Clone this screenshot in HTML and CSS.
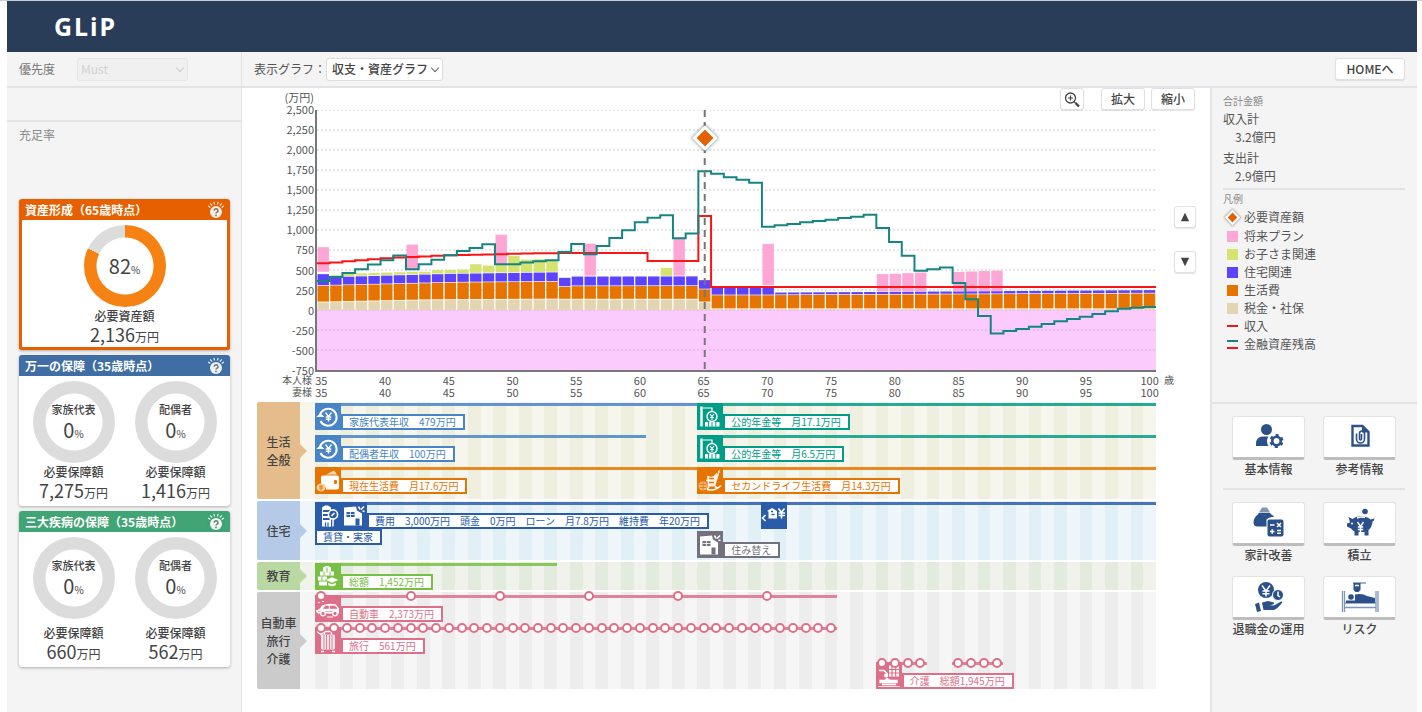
FILE: index.html
```html
<!DOCTYPE html>
<html lang="ja">
<head>
<meta charset="utf-8">
<meta name="viewport" content="width=device-width, initial-scale=1">
<title>GLiP</title>
<link rel="stylesheet" href="styles.css">
</head>
<body>
<svg class="sprite" aria-hidden="true">
  <symbol id="i-help" viewBox="0 0 18 18">
    <g stroke="currentColor" stroke-width="1.2" stroke-linecap="round"><path d="M1.5 5.2 3 6.2M3.6 2.8 4.8 4.2M7 1.4 7.4 3M11 1.4 10.6 3M14.4 2.8 13.2 4.2M16.5 5.2 15 6.2"/></g>
    <circle cx="9" cy="11" r="6" fill="currentColor"/>
    <path d="M7.2 9.8a1.9 1.9 0 1 1 2.6 1.6q-.8.4-.8 1.2" fill="none" class="help-mark" stroke-width="1.5"/>
    <circle cx="9" cy="14.4" r=".9" class="help-dot"/>
  </symbol>
  <symbol id="i-income" viewBox="0 0 26 26">
    <path d="M5.500 17.500a8.500 8.500 0 1 0-.6-6" fill="none" stroke="#fff" stroke-width="2"/>
    <path d="M1.200 13.500h8.400L5.400 9.700z" fill="#fff"/>
    <path d="M10.500 9l3 4 3-4M13.500 13v5M10.800 13.500h5.400M10.800 15.700h5.400" fill="none" stroke="#fff" stroke-width="1.400"/>
  </symbol>
  <symbol id="i-wallet" viewBox="0 0 26 26">
    <path d="M8 8h14q2 0 2 2v10q0 2-2 2H11q0-5-5-6v-6q0-2 2-2z" fill="#fff"/>
    <path d="M11 7l8-4 3 4z" fill="#fff" opacity=".75"/><rect x="19" y="12.500" width="3" height="4" rx="1" fill="#e77400"/>
    <ellipse cx="6" cy="20" rx="4.500" ry="4" fill="#f8cfa2"/><path d="M4 18.500h4M4 20.500h4M6 18v5" stroke="#e77400" stroke-width=".9"/>
  </symbol>
  <symbol id="i-pension" viewBox="0 0 26 26">
    <path d="M4.500 3v20" stroke="#fff" stroke-width="2.400"/>
    <path d="M6 4.500h9v4" fill="none" stroke="#fff" stroke-width="1.200"/>
    <circle cx="15" cy="13" r="5" fill="none" stroke="#fff" stroke-width="1.400"/><path d="M13 10.500l2 2.500 2-2.500M15 13v3.500M13 14h4" fill="none" stroke="#fff" stroke-width="1.100"/>
    <path d="M8 18.500h14.500V23H8z" fill="#fff"/><path d="M11.500 18.500V23M15 18.500V23M18.800 18.500V23" stroke="#009e87" stroke-width="1"/>
  </symbol>
  <symbol id="i-rocking" viewBox="0 0 26 26">
    <path d="M10 8q6 3 9-2l4-4-2 8-3 9h-7z" fill="#fff" opacity=".9"/>
    <path d="M9 13h7M19 10l3-6M12 19l-2 3M18 19l3 2" stroke="#fff" stroke-width="1.600"/><path d="M10 22q8 2 14-4" fill="none" stroke="#fff" stroke-width="1.600"/>
    <path d="M12 11h5M12 15h5M20 4l1 2" stroke="#e77400" stroke-width="1.400"/>
    <ellipse cx="6" cy="18.500" rx="4.500" ry="4.500" fill="#f4b77c"/><path d="M2.500 17h7M2.500 20h7M6 14.500v8" stroke="#e77400" stroke-width=".8"/>
  </symbol>
  <symbol id="i-apartment" viewBox="0 0 26 26">
    <path d="M7 5l3-2h3l3 2v19H7z" fill="#fff"/>
    <path d="M8 8.500h7M8 12.500h6M8 16.500h7" stroke="#2a5caa" stroke-width="1.800"/><path d="M10.500 20v4M13 20v4" stroke="#2a5caa" stroke-width="1.200"/>
    <circle cx="18" cy="12" r="4.600" fill="#2a5caa" stroke="#fff" stroke-width="1.600"/><path d="M16.500 13.500l3-3M15 17v7M18 17v7" stroke="#fff" stroke-width="1.500"/>
  </symbol>
  <symbol id="i-house" viewBox="0 0 26 26">
    <path d="M3 5l12-1 1 4 5 3v12H3z" fill="#fff"/>
    <path d="M5.500 9.500h8v5h-8zM14.500 16h4v7h-4z" class="house-open"/><path d="M5.500 12h8M9.500 9.500v5" stroke="#fff" stroke-width=".8"/>
    <path d="M17.500 4l1.500 3M20 7l3-3M21.500 8.500l2 .5" stroke="#fff" stroke-width="1.600"/>
  </symbol>
  <symbol id="i-refinance" viewBox="0 0 26 26">
    <path d="M6 8.500l5-3 5 3V16H7.500V9z" fill="#fff"/><path d="M10 9h2M10.500 12h3" stroke="#2a5caa" stroke-width="1.400"/>
    <path d="M17.500 6l2.800 4L23.500 6M20.500 9.500V16M17.500 10.500H24M17.500 13H24" fill="none" stroke="#fff" stroke-width="1.600"/>
    <path d="M4.500 12.500l-3 3 3 3" fill="none" stroke="#fff" stroke-width="1.500"/>
  </symbol>
  <symbol id="i-school" viewBox="0 0 26 26">
    <path d="M8 4l4-2 4 2v4h3v4H5V8h3zM3 13h9v4H3zM4 18h8v4H4z" fill="#fff"/><path d="M12 4v5M9 8v4M15 8v4M7 13v4" stroke="#78c043" stroke-width="1"/>
    <path d="M10 16.500l7-3 7 3-7 3zM13 19v3q4 2 8 0v-3l-4 1.500z" fill="#fff" stroke="#78c043" stroke-width=".6"/>
  </symbol>
  <symbol id="i-car" viewBox="0 0 26 26">
    <path d="M1 15q4-1 6-5 7-3 14-1l3 4v5H3q-2-1-2-3z" fill="#fff"/>
    <path d="M8.500 13q1-2 2-2.500h3V13zM15 10.500h5l2 2.500h-7zM3 16h19" fill="#dd6f89" stroke="#dd6f89" stroke-width=".6"/>
    <circle cx="8" cy="18" r="2.300" fill="#dd6f89" stroke="#fff" stroke-width="1.300"/><circle cx="20" cy="18" r="2.300" fill="#dd6f89" stroke="#fff" stroke-width="1.300"/>
    <path d="M3 7h2M7 6h2M12 21.500h6" stroke="#fff" stroke-width="1"/>
  </symbol>
  <symbol id="i-luggage" viewBox="0 0 26 26">
    <path d="M9.500 7V4h7v3" fill="none" stroke="#fff" stroke-width="1.400"/><rect x="6" y="7" width="14" height="15" rx="1.500" fill="#fff" opacity=".85"/>
    <path d="M9 7.500v14M11.500 7.500v14M14.500 7.500v14M17 7.500v14" stroke="#dd6f89" stroke-width=".9"/><path d="M6 24h3M17 24h3M2 4l4 3 3-3" stroke="#fff" stroke-width="1.500" fill="none"/>
  </symbol>
  <symbol id="i-care" viewBox="0 0 26 26">
    <path d="M13 3h10v11H13z" fill="#fff"/><path d="M16 3v11M19.700 3v11M13 7h10M13 10.500h10" stroke="#dd6f89" stroke-width="1.200"/>
    <path d="M3 8h5l3 3v4" fill="none" stroke="#fff" stroke-width="1.500"/><circle cx="10" cy="13" r="2" fill="#fff"/>
    <path d="M4 18h5l2-2 4 2h6v2H4zM6 22h14" stroke="#fff" stroke-width="1.300" fill="#fff"/><path d="M2 24h22" stroke="#fff" stroke-width=".8"/>
  </symbol>
  <symbol id="i-person" viewBox="0 -2 40 40">
    <circle cx="17.500" cy="10.500" r="5.500"/><path d="M7 27v-2q0-7.500 7-7.500h5.500q-1.500 2-1.500 4.500 0 2.500 1.500 5z"/>
    <circle cx="27.500" cy="22" r="4.200" fill="none" stroke="currentColor" stroke-width="2.600"/>
    <circle cx="27.500" cy="22" r="5.900" fill="none" stroke="currentColor" stroke-width="2.200" stroke-dasharray="3 3.180" transform="rotate(15 27.500 22)"/>
  </symbol>
  <symbol id="i-file" viewBox="0 -2 40 40">
    <path d="M12.500 7h10l6 6v13.500h-16z" fill="none" stroke="currentColor" stroke-width="2.400"/><path d="M22 6l7.500 7.500H22z"/>
    <path d="M16.500 14.500v5.500a4 4 0 0 0 8 0v-5.500a2.500 2.500 0 0 0-5 0V20a1 1 0 0 0 2 0v-5" fill="none" stroke="currentColor" stroke-width="1.600"/>
  </symbol>
  <symbol id="i-purse" viewBox="0 -2 40 40">
    <path d="M10 7.500l3-5h5l3 5z" opacity=".6"/><path d="M9.500 8h12v2.500h-12z"/>
    <path d="M9.500 9q-5 3.500-5 8.500 0 4 4 4h9v-7q3-3 7.500-2.500-1-2-3.500-3-6 2.500-12 0z"/>
    <rect x="18.500" y="14.500" width="16" height="17" rx="2"/><path d="M21 20h4.500M28 18l4 4M32 18l-4 4M21 26.500h4.500M23.200 24.300v4.500M28 25.500h4M28 28.200h4" class="cut-line"/>
  </symbol>
  <symbol id="i-pig" viewBox="0 -2 40 40">
    <circle cx="25" cy="6.500" r="2.800"/><path d="M8.500 12l4 2q4-3.500 10-2.500 6 .5 8 3l4-1-.5 2-1.500 1q-.5 6-4 8.500v5.500h-4V27h-6v3.500h-4v-4q-2-1-3.500-3l-4-2v-3l3-1z"/>
    <path d="M17.500 17l3 4.500 3-4.500M20.500 21v6M17.800 22h5.400M17.800 24.500h5.400" class="cut-line"/><circle cx="12" cy="18.500" r="1" class="cut"/><path d="M17 13q4-1.500 8-.5" class="cut-line"/>
  </symbol>
  <symbol id="i-retire" viewBox="0 -2 40 40">
    <circle cx="17" cy="11" r="8"/><path d="M13 6.500l4 5.500 4-5.500M17 11.500v6M13.500 12h7M13.500 14.700h7" class="cut-line"/>
    <circle cx="29" cy="16" r="5.500" stroke="#fff"/><path d="M29 12.500v4l2 1.500" class="cut-line"/>
    <path d="M6 25l4-1.500 2 8.500-4 1zM13 23.500l6-1.500 6 1.500q1 2-3 2.500h-3l6 .5 7-4q2 .5.500 2-4 5-7.500 6.500H14.500z"/>
  </symbol>
  <symbol id="i-bed" viewBox="0 -2 40 40">
    <g fill="none" stroke="currentColor" opacity=".6"><path d="M2.500 12v21M4.500 12v21M36 12v21M38 12v21M5 28.500h31M5 24h31M13 4h13" stroke-width="1.300"/></g>
    <path d="M13.500 4h7v7l-2 2h-3l-2-2z"/><path d="M15 6.500h4" class="cut-line"/><circle cx="11" cy="18" r="2.800"/>
    <path d="M6 21.500h9v-6q7-1.500 12 1.500l8 2V24H6z"/>
  </symbol>
</svg>

<header class="topbar"><h1 class="logo">GLiP</h1></header>

<div class="layout">
  <aside class="sidebar">
    <div class="priority">
      <label for="priority">優先度</label>
      <span class="select select-off"><select id="priority" disabled><option>Must</option></select></span>
    </div>
    <div class="spacer-row"></div>
    <h2 class="ratio-title">充足率</h2>
    <div class="cards">
      <section class="card card-asset">
        <h3>資産形成（65歳時点）<svg class="help"><use href="#i-help"/></svg></h3>
        <div class="gauges">
          <div class="gauge">
            <div class="ring ring-82"><p class="pct">82<small>%</small></p></div>
            <p class="need">必要資産額</p><p class="amount">2,136<small>万円</small></p>
          </div>
        </div>
      </section>
      <section class="card card-life">
        <h3>万一の保障（35歳時点）<svg class="help"><use href="#i-help"/></svg></h3>
        <div class="gauges">
          <div class="gauge">
            <div class="ring"><p class="who">家族代表</p><p class="pct">0<small>%</small></p></div>
            <p class="need">必要保障額</p><p class="amount">7,275<small>万円</small></p>
          </div>
          <div class="gauge">
            <div class="ring"><p class="who">配偶者</p><p class="pct">0<small>%</small></p></div>
            <p class="need">必要保障額</p><p class="amount">1,416<small>万円</small></p>
          </div>
        </div>
      </section>
      <section class="card card-illness">
        <h3>三大疾病の保障（35歳時点）<svg class="help"><use href="#i-help"/></svg></h3>
        <div class="gauges">
          <div class="gauge">
            <div class="ring"><p class="who">家族代表</p><p class="pct">0<small>%</small></p></div>
            <p class="need">必要保障額</p><p class="amount">660<small>万円</small></p>
          </div>
          <div class="gauge">
            <div class="ring"><p class="who">配偶者</p><p class="pct">0<small>%</small></p></div>
            <p class="need">必要保障額</p><p class="amount">562<small>万円</small></p>
          </div>
        </div>
      </section>
    </div>
  </aside>

  <div class="workspace">
    <div class="toolbar">
      <label for="graph">表示グラフ：</label>
      <span class="select"><select id="graph"><option>収支・資産グラフ</option></select></span>
      <button class="btn home" type="button">HOMEへ</button>
    </div>

    <main class="main">
      <div class="chart">
        <p class="unit">(万円)</p>
        <div class="zoom-tools">
          <button class="btn zoom" type="button" aria-label="ズーム"><svg viewBox="0 0 18 18"><circle cx="7.500" cy="7" r="5" fill="none" stroke="currentColor" stroke-width="1.300"/><path d="M5 7h5M7.500 4.500v5M11 10.500l1.500 1.500" stroke="currentColor" stroke-width="1.200"/><path d="M12.500 12l3.500 3.500" stroke="currentColor" stroke-width="2.400"/></svg></button>
          <button class="btn" type="button">拡大</button>
          <button class="btn" type="button">縮小</button>
        </div>
        <div class="y-axis" id="y-axis"></div>
        <div class="plot">
          <svg id="plot" viewBox="0 0 66 3250" preserveAspectRatio="none" role="img" aria-label="収支・資産グラフ"></svg>
          <span class="diamond marker"></span>
        </div>
        <div class="scroll-tools">
          <button class="btn" type="button" aria-label="上へ"><svg viewBox="0 0 12 12"><path d="M6 1l5 10H1z"/></svg></button>
          <button class="btn" type="button" aria-label="下へ"><svg viewBox="0 0 12 12"><path d="M6 11L1 1h10z"/></svg></button>
        </div>
        <p class="x-name">本人様</p><div class="x-axis"></div><p class="x-unit">歳</p>
        <p class="x-name">妻様</p><div class="x-axis"></div>
      </div>

      <div class="timeline">
        <section class="band band-living">
          <h3>生活<br>全般</h3>
          <div class="lanes">
            <div class="lane blue">
              <i class="run" style="--from:1;--to:31"></i><i class="run teal" style="--from:31;--to:67"></i>
              <div class="event" style="--from:1"><svg><use href="#i-income"/></svg><span>家族代表年収　479万円</span></div>
              <div class="event teal" style="--from:31"><svg><use href="#i-pension"/></svg><span>公的年金等　月17.1万円</span></div>
            </div>
            <div class="lane blue">
              <i class="run" style="--from:1;--to:27"></i><i class="run teal" style="--from:31;--to:67"></i>
              <div class="event" style="--from:1"><svg><use href="#i-income"/></svg><span>配偶者年収　100万円</span></div>
              <div class="event teal" style="--from:31"><svg><use href="#i-pension"/></svg><span>公的年金等　月6.5万円</span></div>
            </div>
            <div class="lane orange">
              <i class="run" style="--from:1;--to:67"></i>
              <div class="event" style="--from:1"><svg><use href="#i-wallet"/></svg><span>現在生活費　月17.6万円</span></div>
              <div class="event" style="--from:31"><svg><use href="#i-rocking"/></svg><span>セカンドライフ生活費　月14.3万円</span></div>
            </div>
          </div>
        </section>
        <section class="band band-home">
          <h3>住宅</h3>
          <div class="lanes">
            <div class="lane short navy">
              <i class="run" style="--from:1;--to:67"></i>
              <div class="event" style="--from:1"><svg><use href="#i-apartment"/></svg><svg><use href="#i-house"/></svg><span>費用　3,000万円　頭金　0万円　ローン　月7.8万円　維持費　年20万円</span></div>
              <div class="event" style="--from:36"><svg><use href="#i-refinance"/></svg></div>
            </div>
            <div class="lane second navy">
              <div class="event" style="--from:1"><span>賃貸・実家</span></div>
              <div class="event gray" style="--from:31"><svg><use href="#i-house"/></svg><span>住み替え</span></div>
            </div>
          </div>
        </section>
        <section class="band band-school">
          <h3>教育</h3>
          <div class="lanes">
            <div class="lane short green">
              <i class="run" style="--from:1;--to:20"></i>
              <div class="event" style="--from:1"><svg><use href="#i-school"/></svg><span>総額　1,452万円</span></div>
            </div>
          </div>
        </section>
        <section class="band band-other">
          <h3>自動車<br>旅行<br>介護</h3>
          <div class="lanes">
            <div class="lane pink" data-dots="35-75/7">
              <i class="run" style="--from:1;--to:42"></i>
              <div class="event" style="--from:1"><svg><use href="#i-car"/></svg><span>自動車　2,373万円</span></div>
            </div>
            <div class="lane tall pink" data-dots="35-75/1">
              <i class="run" style="--from:1;--to:42"></i>
              <div class="event" style="--from:1"><svg><use href="#i-luggage"/></svg><span>旅行　561万円</span></div>
            </div>
            <div class="lane short pink" data-dots="79-82/1 85-88/1">
              <i class="run" style="--from:45;--to:49"></i><i class="run" style="--from:51;--to:55"></i>
              <div class="event" style="--from:45"><svg><use href="#i-care"/></svg><span>介護　総額1,945万円</span></div>
            </div>
          </div>
        </section>
      </div>
    </main>

    <aside class="info">
      <section class="summary">
        <h2>合計金額</h2>
        <dl><dt>収入計</dt><dd>3.2億円</dd><dt>支出計</dt><dd>2.9億円</dd></dl>
        <hr>
        <h2>凡例</h2>
        <ul class="legend">
          <li class="first"><span class="key"><i class="diamond"></i></span>必要資産額</li>
          <li><i class="key k-plan"></i>将来プラン</li>
          <li><i class="key k-child"></i>お子さま関連</li>
          <li><i class="key k-home"></i>住宅関連</li>
          <li><i class="key k-living"></i>生活費</li>
          <li><i class="key k-tax"></i>税金・社保</li>
          <li><i class="key k-income"></i>収入</li>
          <li><i class="key k-asset"></i>金融資産残高</li>
        </ul>
      </section>
      <nav class="menu">
        <div class="tiles">
          <button class="tile" type="button"><span><svg><use href="#i-person"/></svg></span>基本情報</button>
          <button class="tile" type="button"><span><svg><use href="#i-file"/></svg></span>参考情報</button>
        </div>
        <hr>
        <div class="tiles">
          <button class="tile" type="button"><span><svg><use href="#i-purse"/></svg></span>家計改善</button>
          <button class="tile" type="button"><span><svg><use href="#i-pig"/></svg></span>積立</button>
          <button class="tile" type="button"><span><svg><use href="#i-retire"/></svg></span>退職金の運用</button>
          <button class="tile" type="button"><span><svg><use href="#i-bed"/></svg></span>リスク</button>
        </div>
      </nav>
    </aside>
  </div>
</div>
<script src="app.js"></script>
</body>
</html>
```
FILE: styles.css
```css
* { box-sizing: border-box; margin: 0; padding: 0; }
body {
  display: flex; flex-direction: column;
  min-height: 100vh; padding: 0 5px 0 7px;
  border-top: 1px solid #c9ccd2;
  background: #fff; color: #555;
  font: 12px/18px "Noto Sans CJK JP", "Noto Sans", sans-serif;
}
button, select { font: inherit; color: inherit; }
hr { border: 0; border-top: 2px solid #e2e3e7; }
.sprite { position: absolute; width: 0; height: 0; }

.topbar { height: 51px; padding-left: 47px; background: #293c58; color: #fff; }
.logo { font: 700 25px/51px "Noto Sans", sans-serif; letter-spacing: 2px; }

.layout { flex: 1; display: grid; grid-template-columns: 235px minmax(0, 1fr); }
.sidebar { background: #f4f4f4; border-right: 1px solid #e2e3e7; }
.priority { display: flex; align-items: center; gap: 22px; height: 36px; padding-left: 12px; border-bottom: 2px solid #e2e3e7; color: #777; }
.spacer-row { height: 34px; border-bottom: 2px solid #e2e3e7; }
.ratio-title { padding: 4px 12px 0; font-weight: 400; font-size: 12px; color: #888; }

.select { position: relative; display: inline-block; }
.select select { appearance: none; width: 117px; height: 23px; padding: 0 5px; border: 1px solid #ddd; border-radius: 3px; background: #fff; color: #444; font-weight: 500; }
.select::after { content: ""; position: absolute; right: 5px; top: 7px; width: 5px; height: 5px; border: solid #666; border-width: 0 1px 1px 0; transform: rotate(45deg); }
.select-off select { width: 111px; padding: 0 3px; background: #f0f0f0; border-color: #e6e6e6; color: #d0d0d0; opacity: 1; font-weight: 400; }
.select-off::after { border-color: #ccc; }

.cards { display: flex; flex-direction: column; gap: 5px; padding: 55px 11px 0 12px; }
.card { border-radius: 3px; background: #fff; box-shadow: 0 1px 3px rgba(0, 0, 0, .3); color: #444; overflow: hidden; }
.card h3 { display: flex; align-items: center; justify-content: space-between; height: 21px; padding: 0 5px 0 6px; font-size: 12px; line-height: 20px; color: #fff; background: var(--tone); }
.card-asset { --tone: #e66000; }
.card-life { --tone: #3f6ea5; }
.card-illness { --tone: #41a474; }
.help { width: 18px; height: 18px; color: #fff; opacity: .9; }
.help-mark { stroke: #777; }
.help-dot { fill: #777; }
.gauges { display: grid; grid-auto-flow: column; justify-content: center; padding: 5px 0 7px; }
.card-asset .gauges { border: 3px solid var(--tone); border-top: 0; padding-bottom: 4px; }
.card-illness .need { margin-top: 5px; }
.gauge { display: flex; flex-direction: column; align-items: center; width: 102px; }
.ring { display: flex; flex-direction: column; align-items: center; justify-content: center; width: 82px; height: 82px; border-radius: 50%; background: radial-gradient(circle closest-side, #fff 28px, transparent 29px), #dcdcdc; }
.ring-82 { background: radial-gradient(circle closest-side, #fff 28px, transparent 29px), conic-gradient(#f58212 0 82%, #dcdcdc 82%); }
.who { font-size: 11px; line-height: 16px; font-weight: 500; }
.pct { font-size: 20px; line-height: 26px; }
.pct small { font-size: 10px; line-height: 10px; }
.need { font-weight: 500; line-height: 18px; }
.amount { font-size: 18px; line-height: 18px; }
.amount small { font-size: 12px; line-height: 12px; }

.workspace { display: grid; grid-template-columns: minmax(0, 1fr) 207px; grid-template-rows: auto 1fr; }
.toolbar { grid-column: 1 / -1; display: flex; align-items: center; height: 36px; padding: 0 12px; background: #f4f4f4; border-bottom: 2px solid #e2e3e7; color: #555; }
.btn { min-width: 44px; height: 22px; border: 1px solid #e0e0e0; border-radius: 3px; background: #fff; box-shadow: 0 1px 1px rgba(0, 0, 0, .1); color: #444; font-weight: 500; line-height: 18px; }
.home { width: 70px; margin-left: auto; }

.main { padding-bottom: 24px; }
.chart { display: grid; grid-template-columns: 73px minmax(0, 1fr) 54px; grid-template-rows: 22px 262px 12px 12px; }
.unit { padding-right: 1px; text-align: right; font-size: 11px; }
.zoom-tools { grid-column: 2 / -1; display: flex; justify-content: flex-end; gap: 6px; padding-right: 15px; }
.zoom { min-width: 24px; width: 24px; margin-right: 11px; }
.zoom svg { width: 18px; height: 18px; margin: 1px auto 0; display: block; }
.y-axis { display: flex; flex-direction: column; margin: -8px 0 -5px; font-size: 11px; line-height: 14px; text-align: right; justify-content: space-between; padding-right: 1px; }
.plot { position: relative; border-left: 2px solid #777; border-bottom: 2px solid #777; }
.plot svg { display: block; width: 100%; height: 100%; }
.plot path { fill: none; vector-effect: non-scaling-stroke; stroke-width: 2; }
.plot .grid { stroke: #aaa; stroke-opacity: .55; stroke-width: 1; stroke-dasharray: 2 2; }
.plot .now { stroke: #777; stroke-dasharray: 7 5; }
.plot .income { stroke: #fa1414; }
.plot .asset { stroke: #158583; }
.below { fill: #fccbfe; }
.tax { fill: #e4d5b2; }
.living { fill: #e77400; }
.home-cost { fill: #5b43ff; }
.child { fill: #d6e36f; }
.plan { fill: #fea6d6; }
.diamond { display: block; width: 12px; height: 12px; background: #e66000; outline: 3px solid #fff; transform: rotate(45deg); box-shadow: 0 0 3px 4px rgba(0, 0, 0, .3); }
.marker { position: absolute; left: calc(100% * 30.5 / 66 - 6px); top: 22px; }
.scroll-tools { display: flex; flex-direction: column; align-items: flex-start; gap: 23px; padding: 96px 0 0 18px; }
.scroll-tools .btn { width: 22px; min-width: 22px; }
.scroll-tools svg { display: block; width: 12px; height: 10px; margin: auto; fill: #444; }
.x-name { grid-column: 1; padding-right: 3px; font-size: 10px; text-align: right; line-height: 16px; }
.x-axis { display: grid; grid-template-columns: repeat(66, minmax(0, 1fr)); font-size: 11px; line-height: 16px; }
.x-axis span { grid-row: 1; justify-self: center; }
.x-unit { padding-left: 8px; font-size: 10px; line-height: 16px; }

.timeline { display: flex; flex-direction: column; gap: 2px; padding: 6px 54px 0 15px; }
.band { display: grid; grid-template-columns: 43px minmax(0, 1fr); background: var(--pale); }
.band h3 { position: relative; display: flex; align-items: center; justify-content: center; background: var(--tone); color: #444; font-size: 12px; line-height: 18px; font-weight: 500; text-align: center; border-radius: 2px 0 0 2px; }
.band h3::after { content: ""; position: absolute; left: 100%; top: calc(50% - 7px); border: 7px solid transparent; border-left-color: var(--tone); border-right: 0; }
.band-living { --tone: #e5bd8c; --pale: #f7f6ed; --stripe: #efefdf; }
.band-home { --tone: #b5cae7; --pale: #eff6fb; --stripe: #e1eff7; }
.band-school { --tone: #bad8a2; --pale: #eff3eb; --stripe: #e3ebdf; }
.band-other { --tone: #cbcbcb; --pale: #f6f6f6; --stripe: #ededed; }
.lanes { margin-left: 15px; padding-top: 1px; background: repeating-linear-gradient(90deg, var(--stripe) 0 calc(100% / 66), transparent calc(100% / 66) calc(100% / 33)); }
.band-other .lanes { padding-top: 3px; }
.lane { --c: #4784c8; display: grid; grid-template-columns: repeat(66, minmax(0, 1fr)); height: 32px; align-items: start; }
.short { height: 27px; }
.second { height: 31px; }
.tall { height: 35px; }
.navy { --c: #2a5caa; }
.orange { --c: #e77400; }
.green { --c: #78c043; }
.pink { --c: #dd6f89; }
.teal { --c: #009e87; }
.gray { --c: #73717c; }
.run { grid-area: 1 / var(--from) / 2 / var(--to); height: 3px; background: var(--c); opacity: .85; }
.lane .event { grid-area: 1 / var(--from) / 2 / -1; justify-self: start; display: flex; align-items: flex-end; white-space: nowrap; }
.event svg { width: 26px; height: 27px; background: var(--c); color: var(--c); }
.house-open { fill: currentColor; }
.event span { padding: 0 7px 0 6px; border: 2px solid var(--c); background: #fff; color: var(--c); font-size: 10px; line-height: 12px; }
.second .gray { padding-top: 2px; }
.dot { grid-row: 1; position: relative; z-index: 1; justify-self: center; width: 10px; height: 10px; margin-top: -4px; border: 2px solid var(--c); border-radius: 50%; background: #fff; }

.info { background: #f4f4f4; border-left: 2px solid #e2e3e7; }
.summary { height: 316px; padding: 4px 12px 0 11px; border-bottom: 2px solid #e2e3e7; }
.summary h2 { font-size: 10px; line-height: 18px; font-weight: 400; color: #888; }
.summary dd { padding-left: 12px; margin-bottom: 3px; }
.legend { list-style: none; }
.legend li { display: flex; align-items: center; gap: 6px; height: 18px; padding-left: 4px; }
.legend .first { margin-bottom: 1px; }
.key { width: 11px; height: 11px; }
.legend .diamond { width: 7px; height: 7px; margin: 2px; outline-width: 2px; box-shadow: 0 0 2px 3px rgba(0, 0, 0, .25); }
.k-plan { background: #fea6d6; }
.k-child { background: #d6e36f; }
.k-home { background: #5b43ff; }
.k-living { background: #e77400; }
.k-tax { background: #e4d5b2; }
.k-income { height: 2px; background: #fa1414; }
.k-asset { height: 9px; border: solid #158583; border-width: 2px 0; border-bottom-color: #fa1414; }
.menu { padding: 12px 12px 0 11px; }
.menu hr { margin: 10px 0 12px; }
.tiles { display: grid; grid-template-columns: 91px 91px; justify-content: center; row-gap: 12px; }
.tile { display: flex; flex-direction: column; align-items: center; border: 0; background: none; color: #444; font-weight: 500; white-space: nowrap; }
.tile span { display: flex; align-items: center; justify-content: center; width: 73px; height: 44px; border: 1px solid #e3e3e3; border-bottom: 3px solid #bdbdbd; border-radius: 3px; background: #fff; color: #2b508a; }
.tile svg { width: 40px; height: 40px; fill: currentColor; }
.cut { fill: #fff; }
.cut-line { fill: none; stroke: #fff; stroke-width: 1.5; }
```
FILE: app.js
```js
const FIRST_AGE = 35;
const TOP = 2500;
const NS = "http://www.w3.org/2000/svg";

// Amounts in units of 10,000 yen, one entry per age from 35 to 100.
const ramp = (from, to, count) =>
  Array.from({ length: count }, (_, i) => from + (to - from) * i / Math.max(count - 1, 1));

const tax = [...ramp(95, 122, 9), ...ramp(124, 132, 10), ...ramp(130, 130, 11), 95, ...ramp(10, 10, 35)];
const living = [...ramp(303, 342, 11), ...ramp(344, 354, 8), 290, ...ramp(298, 300, 10), 258, ...ramp(184, 184, 5), ...ramp(186, 207, 30)];
const home = [448, ...ramp(412, 452, 10), ...ramp(454, 470, 8), 402, ...ramp(418, 420, 10), 373, ...ramp(298, 298, 5), ...ramp(218, 248, 30)];
const child = { 36: 435, 37: 455, 38: 458, 39: 463, 40: 468, 41: 472, 42: 476, 43: 478, 44: 500, 45: 502, 46: 506, 47: 572, 48: 556, 49: 575, 50: 676, 51: 630, 52: 635, 53: 622, 62: 527 };
const plan = { 35: [478, 785], 42: [510, 818], 49: [575, 942], 56: [430, 830], 63: [430, 892], 70: [310, 826], 79: [232, 448], 80: [232, 453], 81: [232, 460], 82: [232, 468], 85: [234, 477], 86: [234, 482], 87: [235, 487], 88: [235, 492] };
const income = [585, 594, 610, 623, 635, 648, 656, 664, 669, 677, 685, 687, 690, 693, 697, 702, 706, 708, 709, ...ramp(712, 714, 7), ...ramp(614, 612, 4), 1175, ...ramp(287, 287, 35)];
const asset = [361, 411, 461, 510, 569, 623, 681, 510, 573, 627, 685, 739, 776, 822, 573, 573, 594, 610, 623, 726, 826, 697, 801, 901, 996, 1096, 1154, 1183, 897, 955, 1735, 1702, 1660, 1627, 1590, 1042, 1059, 1075, 1096, 1112, 1129, 1150, 1166, 1191, 1025, 851, 677, 490, 510, 531, 336, 133, -75, -295, -262, -237, -208, -174, -141, -112, -83, -50, -17, 17, 29, 37];

const plot = document.getElementById("plot");

function add(tag, attrs) {
  const el = document.createElementNS(NS, tag);
  for (const [key, value] of Object.entries(attrs)) el.setAttribute(key, value);
  plot.append(el);
}

function bar(i, low, high, name) {
  if (high > low) add("rect", { x: i + 0.04, y: TOP - high, width: 0.9, height: high - low, class: name });
}

function steps(values) {
  return values.map((v, i) => `${i ? "V" : "M0 "}${TOP - v}H${i + 1}`).join("");
}

add("rect", { x: 0, y: TOP, width: 66, height: 750, class: "below" });
for (let v = 2500; v > -750; v -= 250) add("path", { d: `M0 ${TOP - v}H66`, class: "grid" });

for (let i = 0; i < 66; i++) {
  const age = FIRST_AGE + i;
  bar(i, 0, tax[i], "tax");
  bar(i, tax[i] + 10, living[i], "living");
  bar(i, living[i] + 8, home[i], "home-cost");
  if (child[age]) bar(i, home[i] + 8, child[age], "child");
  if (plan[age]) bar(i, plan[age][0], plan[age][1], "plan");
}
add("path", { d: steps(income), class: "income" });
add("path", { d: steps(asset), class: "asset" });
add("path", { d: "M30.5 0V3250", class: "now" });

const yAxis = document.getElementById("y-axis");
for (let v = 2500; v >= -750; v -= 250) {
  const label = document.createElement("span");
  label.textContent = v.toLocaleString("en-US");
  yAxis.append(label);
}

document.querySelectorAll(".x-axis").forEach(axis => {
  for (let age = FIRST_AGE; age <= 100; age += 5) {
    const label = document.createElement("span");
    label.textContent = age;
    label.style.gridColumn = age - FIRST_AGE + 1;
    axis.append(label);
  }
});

document.querySelectorAll("[data-dots]").forEach(lane => {
  lane.dataset.dots.split(" ").forEach(group => {
    const [from, to, every] = group.split(/[-/]/).map(Number);
    for (let age = from; age <= to; age += every) {
      const dot = document.createElement("i");
      dot.className = "dot";
      dot.style.gridColumn = age - FIRST_AGE + 1;
      lane.append(dot);
    }
  });
});
```
